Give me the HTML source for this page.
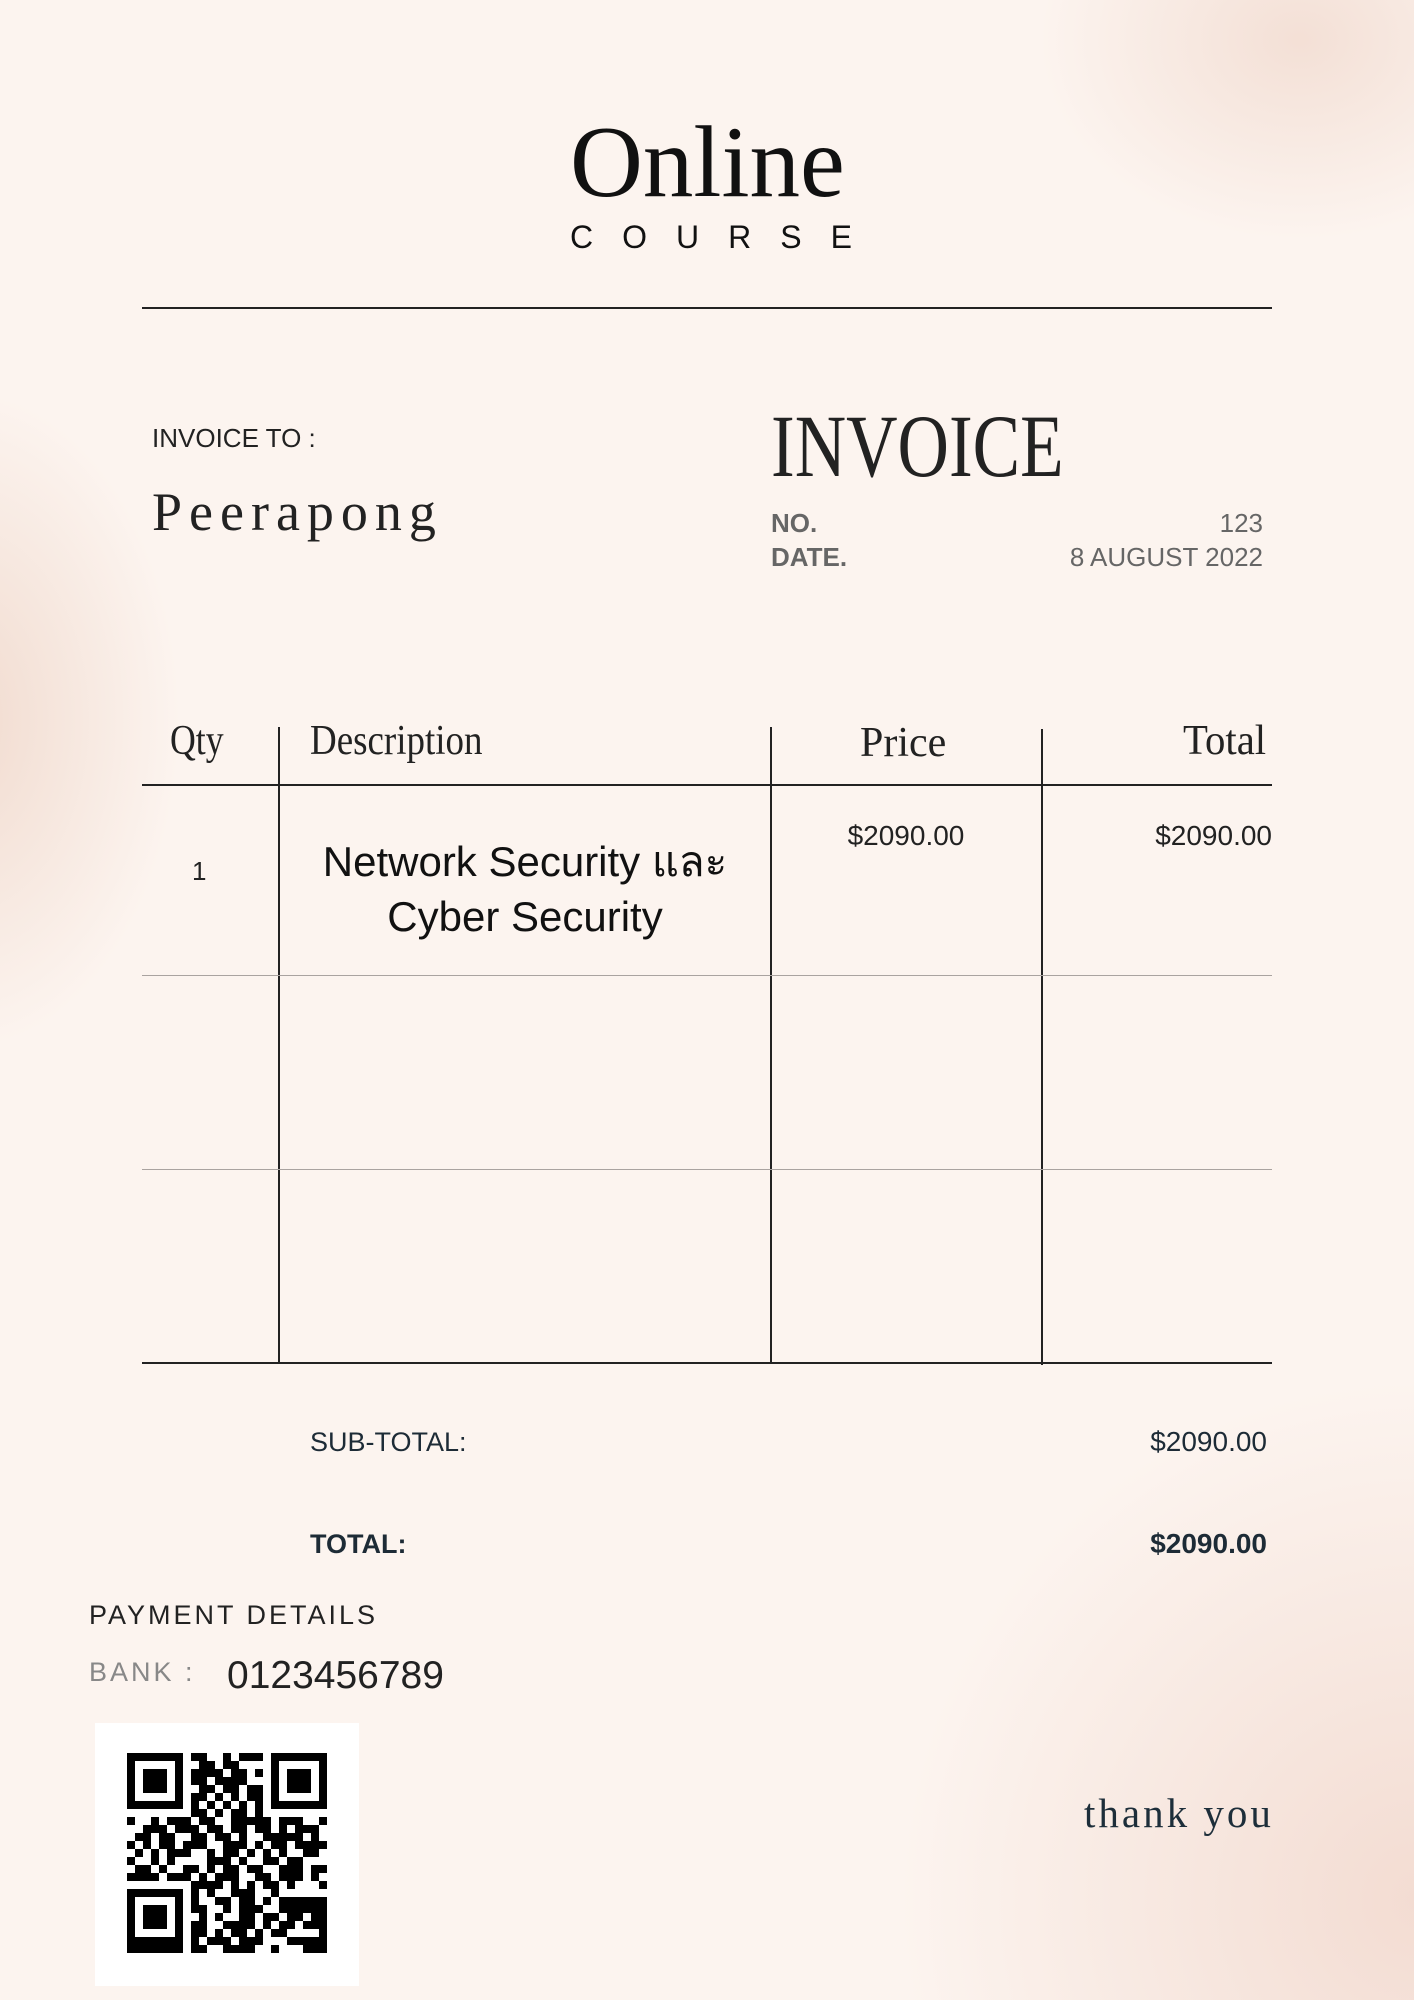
<!DOCTYPE html>
<html><head><meta charset="utf-8"><style>
*{margin:0;padding:0;box-sizing:border-box}
body{width:1414px;height:2000px;position:relative;overflow:hidden;background:#fcf4ef;
background:
radial-gradient(ellipse 260px 200px at 1300px 40px,rgba(240,215,203,.7),rgba(240,215,203,0) 100%),
radial-gradient(ellipse 220px 330px at -40px 720px,rgba(238,212,198,.8),rgba(238,212,198,0) 100%),
radial-gradient(ellipse 520px 520px at 1420px 1900px,rgba(243,220,210,1),rgba(243,220,210,0) 100%),
#fcf4ef;
font-family:"Liberation Sans","Noto Sans CJK SC",sans-serif;color:#111}
.a{position:absolute;white-space:nowrap}
.serif{font-family:"Liberation Serif",serif}
.hl{position:absolute;height:2px;background:#222}
.vl{position:absolute;width:2px;background:#222}
.cond{display:inline-block;transform-origin:0 0}
</style></head><body>
<div class="a serif" style="left:570px;top:108px;font-size:102px;line-height:110px;"><span class="cond" style="transform:scaleX(0.99)">Online</span></div>
<div class="a" style="left:570px;top:220px;font-size:32px;line-height:34px;letter-spacing:29px;">COURSE</div>
<div class="hl" style="left:142px;top:307px;width:1130px"></div>

<div class="a" style="left:152px;top:424px;font-size:26px;line-height:28px;color:#222">INVOICE TO :</div>
<div class="a serif" style="left:152px;top:482px;font-size:54px;line-height:60px;letter-spacing:7px;color:#222">Peerapong</div>

<div class="a serif" style="left:771px;top:402px;font-size:89px;line-height:90px;color:#222"><span class="cond" style="transform:scaleX(0.8)">INVOICE</span></div>
<div class="a" style="left:771px;top:508px;font-size:26px;line-height:30px;font-weight:bold;color:#666">NO.</div>
<div class="a" style="left:771px;top:542px;font-size:26px;line-height:30px;font-weight:bold;color:#666">DATE.</div>
<div class="a" style="right:151px;top:508px;font-size:26px;line-height:30px;color:#666">123</div>
<div class="a" style="right:151px;top:542px;font-size:26px;line-height:30px;color:#666">8 AUGUST 2022</div>

<div class="a serif" style="left:170px;top:718px;font-size:42px;line-height:46px;color:#222"><span class="cond" style="transform:scaleX(0.85)">Qty</span></div>
<div class="a serif" style="left:310px;top:718px;font-size:42px;line-height:46px;color:#222"><span class="cond" style="transform:scaleX(0.88)">Description</span></div>
<div class="a serif" style="left:860px;top:720px;font-size:42px;line-height:46px;color:#222"><span class="cond" style="transform:scaleX(1.0)">Price</span></div>
<div class="a serif" style="left:1183px;top:718px;font-size:42px;line-height:46px;color:#222"><span class="cond" style="transform:scaleX(0.97)">Total</span></div>

<div class="vl" style="left:278px;top:727px;height:636px"></div>
<div class="vl" style="left:770px;top:727px;height:636px"></div>
<div class="vl" style="left:1041px;top:729px;height:636px"></div>
<div class="hl" style="left:142px;top:784px;width:1130px"></div>
<div class="hl" style="left:142px;top:975px;width:1130px;height:1px;background:#a9a3a0"></div>
<div class="hl" style="left:142px;top:1169px;width:1130px;height:1px;background:#a9a3a0"></div>
<div class="hl" style="left:142px;top:1362px;width:1130px"></div>

<div class="a" style="left:192px;top:856px;font-size:26px;line-height:30px;color:#222">1</div>
<div class="a" style="left:280px;width:490px;top:834px;font-size:42px;line-height:55px;text-align:center;color:#111;white-space:normal">Network Security และ<br>Cyber Security</div>
<div class="a" style="left:771px;width:270px;text-align:center;top:821px;font-size:28px;line-height:30px;color:#222">$2090.00</div>
<div class="a" style="right:142px;top:821px;font-size:28px;line-height:30px;color:#222">$2090.00</div>

<div class="a" style="left:310px;top:1427px;font-size:27px;line-height:30px;color:#1d2b36">SUB-TOTAL:</div>
<div class="a" style="right:147px;top:1427px;font-size:28px;line-height:30px;color:#1d2b36">$2090.00</div>
<div class="a" style="left:310px;top:1529px;font-size:27px;line-height:30px;font-weight:bold;color:#1d2b36">TOTAL:</div>
<div class="a" style="right:147px;top:1529px;font-size:28px;line-height:30px;font-weight:bold;color:#1d2b36">$2090.00</div>

<div class="a" style="left:89px;top:1600px;font-size:27px;line-height:30px;letter-spacing:3px;color:#222">PAYMENT DETAILS</div>
<div class="a" style="left:89px;top:1657px;font-size:27px;line-height:30px;letter-spacing:3px;color:#888">BANK :</div>
<div class="a" style="left:227px;top:1655px;font-size:39px;line-height:42px;color:#222">0123456789</div>

<div class="a" style="left:95px;top:1723px;width:264px;height:263px;background:#fff"></div>
<svg class="a" style="left:127px;top:1753px" width="200" height="200" viewBox="0 0 25 25" shape-rendering="crispEdges" id="qr"></svg>

<div class="a serif" style="left:1084px;top:1790px;font-size:41px;line-height:46px;letter-spacing:3px;color:#1d2e3a">thank you</div>

<script>
var rows=[
"1111111011001011101111111",
"1000001001101100001000001",
"1011101011110110101011101",
"1011101011011110001011101",
"1011101001101101101011101",
"1000001011010101101000001",
"1111111010101010101111111",
"0000000011010110100000000",
"1001011101100111110111001",
"0011101110110110110101110",
"0110110011011010011111010",
"1010110111001110101101111",
"0101011100101101010100110",
"1001010000111010011011000",
"0110100110101101100111011",
"1111011101011100110111010",
"0000000011110101011010001",
"1111111010100111001000000",
"1000001010011011010111111",
"1011101011001011100111111",
"1011101001010011011011011",
"1011101011001111010110111",
"1000001011010110101100001",
"1111111010111011100011111",
"1111111011001111001000111"];
var s="";for(var y=0;y<25;y++)for(var x=0;x<25;x++)if(rows[y][x]=="1")s+='<rect x="'+x+'" y="'+y+'" width="1" height="1"/>';
document.getElementById("qr").innerHTML=s;
</script>
</body></html>
